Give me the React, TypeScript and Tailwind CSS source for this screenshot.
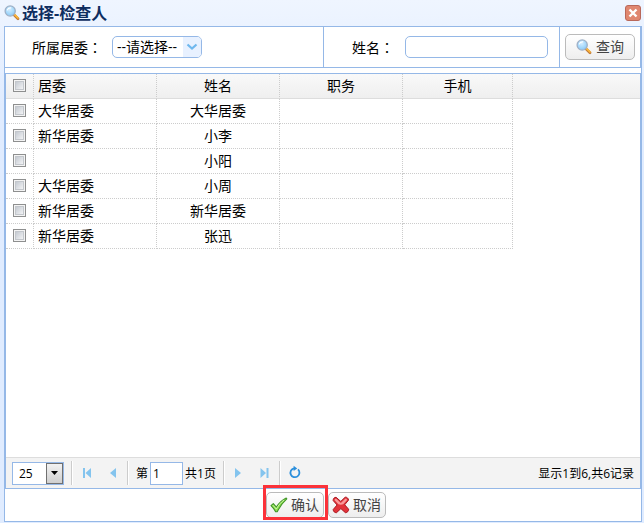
import React from "react";

const people = [
  { committee: "大华居委", name: "大华居委" },
  { committee: "新华居委", name: "小李" },
  { committee: "", name: "小阳" },
  { committee: "大华居委", name: "小周" },
  { committee: "新华居委", name: "新华居委" },
  { committee: "新华居委", name: "张迅" },
];

function SearchIcon() {
  return (
    <svg width="16" height="16" viewBox="0 0 16 16" className="shrink-0" aria-hidden="true">
      <defs>
        <radialGradient id="lens" cx="45%" cy="35%" r="75%">
          <stop offset="0" stopColor="#d4edff" />
          <stop offset="0.5" stopColor="#a8dafc" />
          <stop offset="1" stopColor="#7fc0f2" />
        </radialGradient>
      </defs>
      <path d="M10 9.700l4 4" stroke="#c07a3a" strokeWidth="2.800" strokeLinecap="round" />
      <path d="M10.600 9.600l3.400 3.400" stroke="#ffb938" strokeWidth="1.700" strokeLinecap="round" />
      <circle cx="6.200" cy="6" r="5.100" fill="url(#lens)" stroke="#9fb0c6" strokeWidth="1.300" />
      <path d="M3.200 5.300c.6-1.900 2.200-2.600 4-2.300" stroke="#fff" strokeWidth="1.100" fill="none" />
    </svg>
  );
}

function CheckIcon() {
  return (
    <svg width="18" height="16" viewBox="0 0 18 16" className="shrink-0" aria-hidden="true">
      <path
        d="M1 8.6l2.3-1.9 3.1 3.4C8.700 6.400 12 3 16.200 1l.6.8C12.900 5.200 9.800 9.600 7.200 14.800H5.600C4.500 12.500 3 10.500 1 8.600z"
        fill="#8ee04e"
        stroke="#3f9427"
        strokeWidth="1.1"
        strokeLinejoin="round"
      />
      <path d="M3 8.300l3.300 3.800C8.500 8 11 5.200 14 3" stroke="#d3f7ae" strokeWidth="0.9" fill="none" />
    </svg>
  );
}

function CrossIcon() {
  return (
    <svg width="18" height="18" viewBox="0 0 18 18" className="shrink-0" aria-hidden="true">
      <path
        d="M4 1.300L8.800 5.400 13.200 1.200c1.600-.3 3.300 1.200 3.300 2.900L12.700 8.800l3.900 4.400c.1 1.900-1.200 3.400-3.200 3.500L8.900 12.600l-4.400 4.100c-1.800.1-3.300-1.200-3.300-3.200L5.100 9 1.200 4.600C1 2.700 2.200 1.400 4 1.300z"
        fill="#e2333a"
        stroke="#a9141c"
        strokeLinejoin="round"
      />
      <path
        d="M2.500 4c.3-1 1-1.500 1.800-1.300l4.500 4.200 4.800-4.300c.8.1 1.300.6 1.500 1.400L11.200 8.200c-1.500.6-3.300.6-4.800 0z"
        fill="#f99a9a"
      />
    </svg>
  );
}

function Check({ label }: { label: string }) {
  return (
    <input
      type="checkbox"
      aria-label={label}
      className="mx-auto block size-[13px] appearance-none border border-[#8e8f8f] bg-linear-to-br from-[#b9bfc8] to-[#ffffff] shadow-[inset_0_0_0_1px_#f4f4f4,inset_0_0_0_2px_#c3c7cc] checked:from-[#4a7ebb]"
    />
  );
}

function Colon() {
  return <span className="font-['Noto_Sans_CJK_TC',sans-serif]">：</span>;
}

function Divider() {
  return <span className="h-6 w-px shrink-0 bg-[#ccc] shadow-[1px_0_0_#fff]" />;
}

function PageButton({ label, children }: { label: string; children: React.ReactNode }) {
  return (
    <button type="button" aria-label={label} className="flex size-[26px] items-center justify-center">
      <svg width="16" height="16" viewBox="0 0 16 16" fill="#84c4ee" aria-hidden="true">
        {children}
      </svg>
    </button>
  );
}

const linkButton =
  "flex h-[26px] items-center rounded-[5px] border border-[#bbb] bg-linear-to-b from-white to-[#eee] text-sm text-[#444]";
const headCell =
  "border-b border-b-[#ddd] border-r border-r-[#ccc] [border-right-style:dotted] bg-linear-to-b from-[#f9f9f9] to-[#efefef] font-normal";
const cell = "border-r border-b border-dotted border-[#ccc]";

export default function App() {
  return (
    <div className="flex h-screen flex-col bg-linear-to-b from-[#eff5ff] to-[#e0ecff] to-20% pr-[2px] pb-px pl-1 font-['Open_Sans','Noto_Sans_CJK_SC',sans-serif] text-sm text-black">
      <header className="flex h-[26px] shrink-0 items-center justify-between pr-px">
        <h1 className="flex items-center gap-0.5 text-base leading-6 font-bold text-[#0e2d5f]">
          <SearchIcon />
          选择-检查人
        </h1>
        <button
          type="button"
          aria-label="关闭"
          className="flex size-4 items-center justify-center rounded-[3px] border border-[#b9685a] bg-[#e08770]"
        >
          <svg width="10" height="10" viewBox="0 0 10 10" aria-hidden="true">
            <path d="M1.500 1.500l7 7M8.500 1.500l-7 7" stroke="#fff" strokeWidth="2.400" />
          </svg>
        </button>
      </header>

      <main className="flex min-h-0 flex-1 flex-col border border-[#95b8e7] bg-white">
        <form className="grid h-[41px] shrink-0 grid-cols-[319fr_236fr_80px] border-r border-b border-[#95b8e7]">
          <div className="flex min-w-0 items-center border-r border-[#95b8e7] pl-[27px]">
            <label htmlFor="committee" className="w-20">
              所属居委
              <Colon />
            </label>
            <div className="relative">
              <select
                id="committee"
                className="block h-[22px] w-[90px] appearance-none rounded-[5px] border border-[#95b8e7] bg-white pl-1 text-sm leading-5"
              >
                <option>--请选择--</option>
              </select>
              <span className="pointer-events-none absolute inset-y-px right-px flex w-[18px] items-center justify-center rounded-r-[4px] bg-[#e8f1ff]">
                <svg width="12" height="8" viewBox="0 0 12 8" fill="none" aria-hidden="true">
                  <path d="M1.500 1.500L6 5.500l4.500-4" stroke="#6fb8ee" strokeWidth="2.200" />
                </svg>
              </span>
            </div>
          </div>
          <div className="flex min-w-0 items-center border-r border-[#95b8e7] pr-[11px] pl-7">
            <label htmlFor="person" className="w-[53px] shrink-0">
              姓名
              <Colon />
            </label>
            <input id="person" className="h-[22px] min-w-0 flex-1 rounded-[5px] border border-[#95b8e7] px-1" />
          </div>
          <div className="flex items-center justify-center">
            <button type="button" className={`${linkButton} w-[70px] justify-center gap-1`}>
              <SearchIcon />
              查询
            </button>
          </div>
        </form>

        <section className="mt-[5px] flex min-h-0 flex-1 flex-col border border-[#95b8e7]">
          <div className="min-h-0 flex-1 overflow-hidden">
            <table className="w-full table-fixed border-separate border-spacing-0 text-sm">
              <colgroup>
                <col className="w-7" />
                <col className="w-[123px]" />
                <col className="w-[123px]" />
                <col className="w-[123px]" />
                <col className="w-[110px]" />
                <col />
              </colgroup>
              <thead>
                <tr className="h-[25px] leading-5">
                  <th className={`${headCell} pb-0.5`}>
                    <Check label="全选" />
                  </th>
                  <th className={`${headCell} pl-1 text-left`}>居委</th>
                  <th className={headCell}>姓名</th>
                  <th className={headCell}>职务</th>
                  <th className={headCell}>手机</th>
                  <td className="border-b border-[#ddd] bg-linear-to-b from-[#f9f9f9] to-[#efefef]" />
                </tr>
              </thead>
              <tbody>
                {people.map((p) => (
                  <tr key={p.name} className="h-[25px] leading-5">
                    <td className={`${cell} pb-0.5`}>
                      <Check label={p.name} />
                    </td>
                    <td className={`${cell} pl-1`}>{p.committee}</td>
                    <td className={`${cell} text-center`}>{p.name}</td>
                    <td className={cell} />
                    <td className={cell} />
                    <td />
                  </tr>
                ))}
              </tbody>
            </table>
          </div>

          <nav
            aria-label="分页"
            className="flex h-[31px] shrink-0 items-center border-t border-[#ddd] bg-[#f3f3f3] px-1.5 text-xs"
          >
            <div className="relative mr-[7px]">
              <select
                aria-label="每页记录数"
                className="block h-[23px] w-[52px] appearance-none border border-[#95b8e7] bg-white pt-0.5 pl-1.5 text-xs"
              >
                <option>25</option>
              </select>
              <span className="pointer-events-none absolute inset-y-px right-px flex w-[17px] items-center justify-center border border-[#707070] bg-linear-to-b from-[#f2f2f2] to-[#cfcfcf]">
                <svg width="7" height="4" viewBox="0 0 7 4" aria-hidden="true">
                  <path d="M0 0h7L3.500 4z" />
                </svg>
              </span>
            </div>
            <Divider />
            <div className="flex w-[55px] justify-center">
              <PageButton label="首页">
                <path d="M4 3h2v10H4zM12 3v10L6.500 8z" />
              </PageButton>
              <PageButton label="上一页">
                <path d="M11 3v10L5 8z" />
              </PageButton>
            </div>
            <Divider />
            <label htmlFor="page" className="ml-2 pt-0.5">
              第
            </label>
            <input
              id="page"
              defaultValue="1"
              className="mx-0.5 h-[23px] w-[33px] border border-[#95b8e7] bg-white pl-0.5"
            />
            <span className="mr-[7px] pt-0.5">共1页</span>
            <Divider />
            <div className="flex w-[55px] justify-center">
              <PageButton label="下一页">
                <path d="M5 3v10l6-5z" />
              </PageButton>
              <PageButton label="末页">
                <path d="M10.500 3h2v10h-2zM4.500 3v10L10 8z" />
              </PageButton>
            </div>
            <Divider />
            <div className="ml-0.5">
              <PageButton label="刷新">
                <path d="M11 4.400A4.500 4.500 0 1 1 7 3.300" stroke="#2b8fdc" strokeWidth="1.800" fill="none" />
                <path d="M6.600 .8v5.200L10.200 3.400z" fill="#2b8fdc" />
              </PageButton>
            </div>
            <span className="ml-auto pt-0.5">显示1到6,共6记录</span>
          </nav>
        </section>

        <footer className="flex h-8 shrink-0 items-center justify-center gap-1 pl-1.5">
          <div className="relative">
            <button type="button" className={`${linkButton} gap-[3px] pr-1 pl-[3px]`}>
              <CheckIcon />
              确认
            </button>
            <span className="pointer-events-none absolute -top-[7px] -right-1 -bottom-0.5 -left-[3px] border-[3px] border-[#fb3239]" />
          </div>
          <button type="button" className={`${linkButton} gap-[3px] pr-1 pl-[3px]`}>
            <CrossIcon />
            取消
          </button>
        </footer>
      </main>
    </div>
  );
}
